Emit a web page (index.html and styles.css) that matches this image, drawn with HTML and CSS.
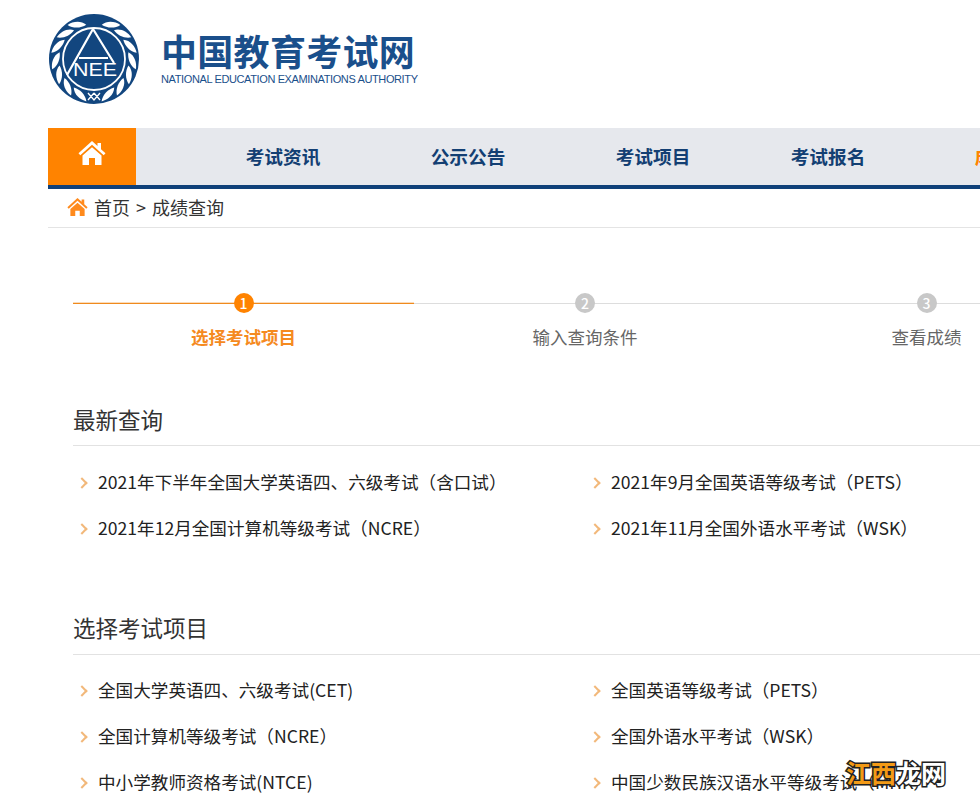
FILE: index.html
```html
<!DOCTYPE html>
<html lang="zh-CN">
<head>
<meta charset="utf-8">
<title>中国教育考试网</title>
<link rel="stylesheet" href="styles.css">
</head>
<body>
<div class="page">
  <header class="header">
    <svg class="emblem" viewBox="0 0 92 92" width="92" height="92" aria-label="NEEA">
      <defs><path id="leaf" d="M44 11 C48 5 56 4 62 6 C58 11 50 13 44 11Z" fill="#fff"/></defs>
      <circle cx="46" cy="46" r="45" fill="#12467f"/>
      <circle cx="46" cy="46" r="31" fill="none" stroke="#fff" stroke-width="1.8"/>
      <g>
        <use href="#leaf" transform="rotate(16 46 46)"/><use href="#leaf" transform="rotate(38 46 46)"/>
        <use href="#leaf" transform="rotate(60 46 46)"/><use href="#leaf" transform="rotate(82 46 46)"/>
        <use href="#leaf" transform="rotate(104 46 46)"/><use href="#leaf" transform="rotate(126 46 46)"/>
        <use href="#leaf" transform="rotate(148 46 46)"/>
      </g>
      <g transform="matrix(-1 0 0 1 92 0)">
        <use href="#leaf" transform="rotate(16 46 46)"/><use href="#leaf" transform="rotate(38 46 46)"/>
        <use href="#leaf" transform="rotate(60 46 46)"/><use href="#leaf" transform="rotate(82 46 46)"/>
        <use href="#leaf" transform="rotate(104 46 46)"/><use href="#leaf" transform="rotate(126 46 46)"/>
        <use href="#leaf" transform="rotate(148 46 46)"/>
      </g>
      <path d="M45 16 L19 62 M45 16 L66 50 M31 45 H60" fill="none" stroke="#fff" stroke-width="2.2"/>
      <text x="47" y="63" class="emblem-text" text-anchor="middle" textLength="44" lengthAdjust="spacingAndGlyphs">NEE</text>
      <path d="M40 80 L46 87 L52 80 M46 80 L40 87 M46 80 L52 87" fill="none" stroke="#fff" stroke-width="1.3"/>
    </svg>
    <div class="brand">
      <div class="brand-cn">中国教育考试网</div>
      <div class="brand-en">NATIONAL EDUCATION EXAMINATIONS AUTHORITY</div>
    </div>
  </header>

  <nav class="nav">
    <a class="nav-home" href="#" aria-label="首页">
      <svg viewBox="0 0 28 26" width="28" height="26"><path fill="#fff" d="M14 1 L19.5 6 V3 H23 V9.2 L27.5 13.2 L25.7 15.2 L14 4.8 L2.3 15.2 L.5 13.2Z M14 7.3 L23.5 15.6 V25 H17 V18 H11 V25 H4.5 V15.6Z"/></svg>
    </a>
    <a class="nav-item nav-item-first" href="#">考试资讯</a>
    <a class="nav-item" href="#">公示公告</a>
    <a class="nav-item" href="#">考试项目</a>
    <a class="nav-item nav-item-short" href="#">考试报名</a>
    <a class="nav-item nav-item-active" href="#">成绩查询</a>
  </nav>

  <div class="crumb">
    <svg viewBox="0 0 28 26" width="21" height="20"><path fill="#ff8a1c" d="M14 1 L19.5 6 V3 H23 V9.2 L27.5 13.2 L25.7 15.2 L14 4.8 L2.3 15.2 L.5 13.2Z M14 7.3 L23.5 15.6 V25 H17 V18 H11 V25 H4.5 V15.6Z"/></svg>
    <span>首页 &gt; 成绩查询</span>
  </div>

  <main class="main">
    <ol class="steps">
      <li class="step step-active"><span class="step-num">1</span><span class="step-label">选择考试项目</span></li>
      <li class="step"><span class="step-num">2</span><span class="step-label">输入查询条件</span></li>
      <li class="step"><span class="step-num">3</span><span class="step-label">查看成绩</span></li>
    </ol>

    <section class="section section-first">
      <h2 class="section-title">最新查询</h2>
      <ul class="links">
        <li>2021年下半年全国大学英语四、六级考试（含口试）</li>
        <li>2021年9月全国英语等级考试（PETS）</li>
        <li>2021年12月全国计算机等级考试（NCRE）</li>
        <li>2021年11月全国外语水平考试（WSK）</li>
      </ul>
    </section>

    <section class="section section-second">
      <h2 class="section-title">选择考试项目</h2>
      <ul class="links">
        <li>全国大学英语四、六级考试(CET)</li>
        <li>全国英语等级考试（PETS）</li>
        <li>全国计算机等级考试（NCRE）</li>
        <li>全国外语水平考试（WSK）</li>
        <li>中小学教师资格考试(NTCE)</li>
        <li>中国少数民族汉语水平等级考试（MHK）</li>
      </ul>
    </section>
  </main>
</div>
<div class="watermark"><span class="wm-orange">江西</span><span class="wm-white">龙网</span></div>
</body>
</html>
```

FILE: styles.css
```css
html, body {
  margin: 0;
  height: 803px;
  overflow: hidden;
  background: #fff;
}
body {
  position: relative;
  font-family: "Noto Sans CJK SC", "Noto Sans", sans-serif;
  color: #222;
}
.page {
  width: 1400px;
  padding-left: 48px;
  box-sizing: border-box;
}
.header {
  height: 128px;
  display: flex;
  align-items: flex-start;
  padding-top: 13px;
  box-sizing: border-box;
}
.emblem-text {
  font-family: "Liberation Sans", sans-serif;
  font-size: 19px;
  fill: #fff;
}
.brand {
  margin-left: 21px;
  padding-top: 15px;
  color: #1a4f8b;
}
.brand-cn {
  font-size: 36px;
  line-height: 44px;
  font-weight: 700;
  letter-spacing: .3px;
  white-space: nowrap;
}
.brand-en {
  font-family: "Liberation Sans", sans-serif;
  font-size: 11px;
  line-height: 14px;
  letter-spacing: -.38px;
  white-space: nowrap;
}
.nav {
  display: flex;
  height: 57px;
  background: #e6e8ed;
  border-bottom: 4px solid #0f4079;
}
.nav a { text-decoration: none; }
.nav-home {
  width: 88px;
  background: #ff8300;
  display: flex;
  justify-content: center;
  padding-top: 12px;
  box-sizing: border-box;
}
.nav-item {
  width: 185px;
  text-align: center;
  font-size: 18.7px;
  font-weight: 700;
  line-height: 56px;
  color: #133f73;
}
.nav-item-first { margin-left: 54.5px; }
.nav-item-short { width: 165px; }
.nav-item-active { color: #ff8300; margin-left: 9px; }
.crumb {
  height: 39px;
  box-sizing: border-box;
  border-bottom: 1px solid #e4e4e4;
  display: flex;
  align-items: center;
  gap: 6px;
  padding-left: 19px;
  padding-bottom: 2px;
  font-size: 18px;
  word-spacing: 2px;
  color: #333;
}
.main { padding-left: 25px; }
.steps {
  list-style: none;
  margin: 75px 0 0;
  padding: 0;
  display: grid;
  grid-template-columns: 341px 342px 341px;
}
.step {
  display: flex;
  flex-direction: column;
  align-items: center;
  border-top: 1px solid #ddd;
}
.step-active {
  border-top-color: #f08a1d;
  box-shadow: 0 -1px 0 rgba(240, 138, 29, .3);
}
.step-num {
  width: 20px;
  height: 20px;
  margin-top: -11px;
  border-radius: 50%;
  background: #c8c8c8;
  color: #fff;
  font-size: 14px;
  font-weight: 500;
  line-height: 20px;
  text-align: center;
}
.step-active .step-num { background: #ff8300; }
.step-label {
  margin-top: 11px;
  font-size: 17.5px;
  line-height: 26px;
  color: #666;
}
.step-active .step-label { color: #f58a1f; font-weight: 700; }
.section { width: 1200px; }
.section-first { margin-top: 52px; }
.section-second { margin-top: 59px; }
.section-title {
  margin: 0;
  font-size: 22.5px;
  font-weight: 400;
  line-height: 34px;
  color: #333;
  padding-bottom: 9px;
  border-bottom: 1px solid #e2e2e2;
}
.section-second .section-title { padding-bottom: 10px; }
.links {
  list-style: none;
  margin: 13px 0 0;
  padding: 0;
  display: grid;
  grid-template-columns: 513px 513px;
}
.section-second .links { margin-top: 12px; }
.links li {
  position: relative;
  height: 46px;
  line-height: 46px;
  padding-left: 25px;
  font-size: 17.6px;
  color: #222;
  white-space: nowrap;
}
.links li::before {
  content: "";
  position: absolute;
  left: 5px;
  top: 20px;
  width: 8px;
  height: 8px;
  border-top: 2px solid #f2b87a;
  border-right: 2px solid #f2b87a;
  transform: rotate(45deg);
  box-sizing: border-box;
}
.watermark {
  position: absolute;
  left: 846px;
  top: 755px;
  font-size: 25px;
  line-height: 34px;
  font-weight: 700;
  white-space: nowrap;
  -webkit-text-stroke: 3px #222;
  paint-order: stroke fill;
}
.wm-orange { color: #f39a16; }
.wm-white { color: #fff; }
```
